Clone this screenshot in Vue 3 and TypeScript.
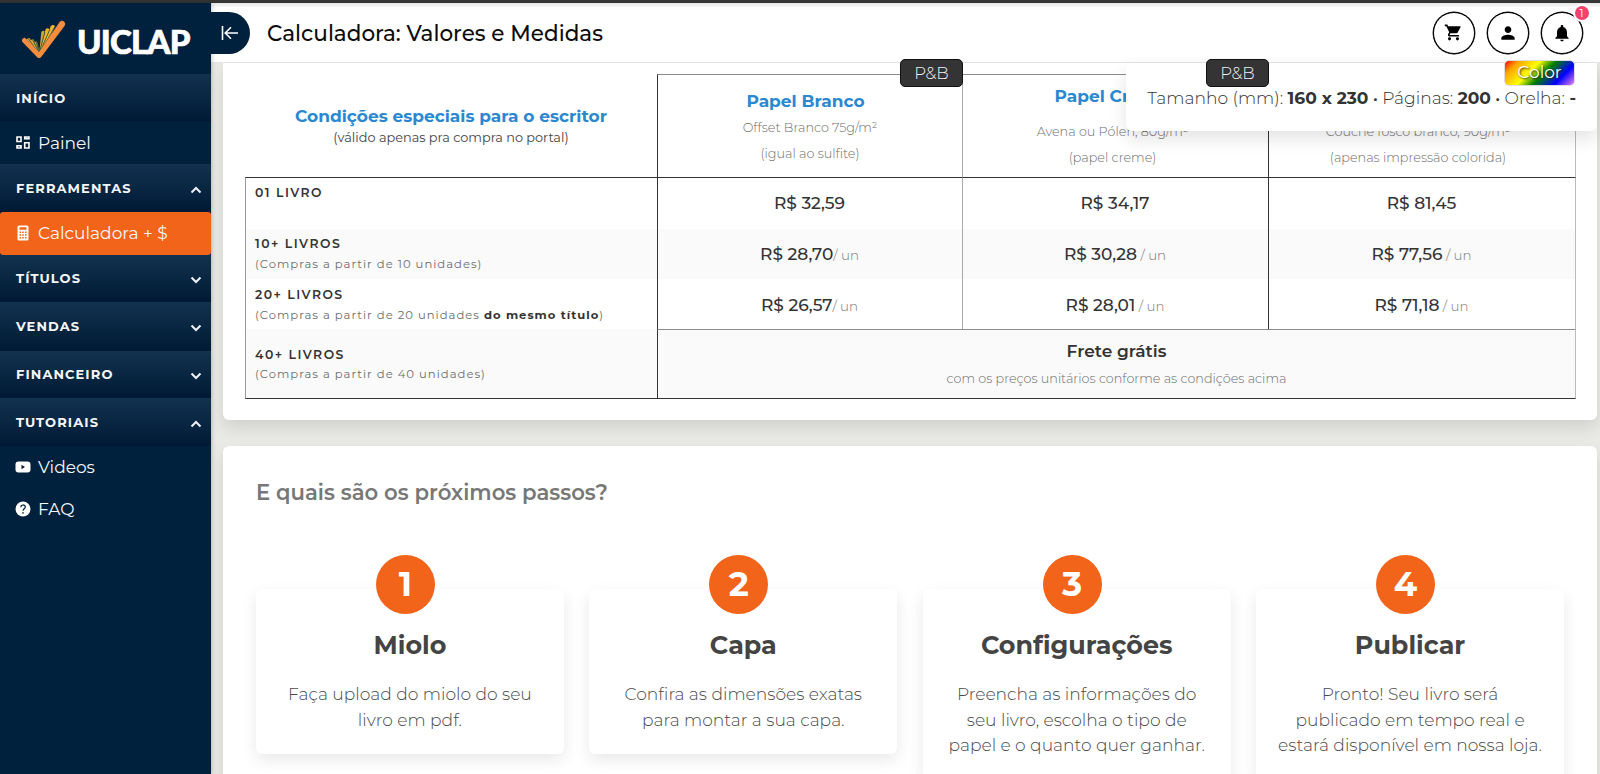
<script setup lang="ts">
import { ref } from 'vue'

interface NavItem {
	label: string
	icon: string
	active?: boolean
}

interface NavGroup {
	title: string
	height: number
	chevron?: 'up' | 'down'
	items: NavItem[]
}

const navGroups: NavGroup[] = [
	{ title: 'INÍCIO', height: 48, items: [{ label: 'Painel', icon: 'dashboard' }] },
	{
		title: 'FERRAMENTAS',
		height: 48,
		chevron: 'up',
		items: [{ label: 'Calculadora + $', icon: 'calculator', active: true }]
	},
	{ title: 'TÍTULOS', height: 47, chevron: 'down', items: [] },
	{ title: 'VENDAS', height: 49, chevron: 'down', items: [] },
	{ title: 'FINANCEIRO', height: 47, chevron: 'down', items: [] },
	{
		title: 'TUTORIAIS',
		height: 48,
		chevron: 'up',
		items: [
			{ label: 'Videos', icon: 'video' },
			{ label: 'FAQ', icon: 'help' }
		]
	}
]

const priceRows = [
	{
		label: '01 LIVRO',
		note: '',
		strong: '',
		end: '',
		prices: ['R$ 32,59', 'R$ 34,17', 'R$ 81,45'],
		units: ['', '', '']
	},
	{
		label: '10+ LIVROS',
		note: '(Compras a partir de 10 unidades',
		strong: '',
		end: ')',
		prices: ['R$ 28,70', 'R$ 30,28', 'R$ 77,56'],
		units: ['/ un', ' / un', ' / un']
	},
	{
		label: '20+ LIVROS',
		note: '(Compras a partir de 20 unidades ',
		strong: 'do mesmo título',
		end: ')',
		prices: ['R$ 26,57', 'R$ 28,01', 'R$ 71,18'],
		units: ['/ un', ' / un', ' / un']
	}
]

const steps = [
	{ title: 'Miolo', lines: ['Faça upload do miolo do seu', 'livro em pdf.'] },
	{ title: 'Capa', lines: ['Confira as dimensões exatas', 'para montar a sua capa.'] },
	{
		title: 'Configurações',
		lines: ['Preencha as informações do', 'seu livro, escolha o tipo de', 'papel e o quanto quer ganhar.']
	},
	{
		title: 'Publicar',
		lines: ['Pronto! Seu livro será', 'publicado em tempo real e', 'estará disponível em nossa loja.']
	}
]

const notifications = ref(1)
</script>

<template>
	<div class="app">
		<div class="top-line"></div>

		<aside class="sidebar">
			<div class="logo">
				<svg class="logo-mark" width="46" height="40" viewBox="0 0 46 40">
					<path d="M18 36 5.500 19l3-1L18.500 34z" fill="#e9a23c" />
					<path d="M18 35 9.500 20l3-.8L18.800 34z" fill="#d9a93a" />
					<path d="M18 35 13.500 22l2.500-.6L19 34z" fill="#b5a23a" />
					<path d="M18 35 20.300 12q1.600-2.300 3.400-.4L19.500 35z" fill="#c9a836" />
					<path d="M18.500 35 24.500 9.500q1.900-2.500 4 0L20 35z" fill="#eeb133" />
					<path d="M19 35 29.800 6.200q2-2.500 4.200-.2L21 35z" fill="#f8b62d" />
					<path d="M18.200 34 7.500 19M18.200 33 11.500 19.500M18.200 33 15 21M18.300 33 23.800 12M18.500 33 28.800 9.500M18.500 33 34 6.500" fill="none" stroke="#3e5640" stroke-width=".9" />
					<path d="M1 21.500Q.4 18.200 4 17.800L18 32.300 38.800 1.800Q41-.2 43.500 2q1.300 1.800 0 4L20 37.200q-2 1.800-3.800 0Z" fill="#f68c3e" />
				</svg>
				<span class="logo-text">UICLAP</span>
			</div>

			<nav>
				<template v-for="group in navGroups" :key="group.title">
					<div class="nav-group" :style="{ height: group.height + 'px' }">
						<span>{{ group.title }}</span>
						<svg
							v-if="group.chevron"
							class="chevron"
							:class="group.chevron"
							width="12"
							height="8"
							viewBox="0 0 12 8"
						>
							<path d="M1.500 1.500 6 6l4.500-4.500" fill="none" stroke="#eef2f6" stroke-width="2" />
						</svg>
					</div>
					<a
						v-for="item in group.items"
						:key="item.label"
						class="nav-item"
						:class="{ active: item.active }"
					>
						<svg v-if="item.icon === 'dashboard'" width="16" height="16" viewBox="0 0 16 16">
							<path
								d="M2 2h4v4.500H2zM9.700 2H14v1.800H9.700zM2 10.800h4v2.200H2zM9.700 7.800H14V13H9.700z"
								fill="none"
								stroke="#fff"
								stroke-width="1.600"
							/>
						</svg>
						<svg v-else-if="item.icon === 'calculator'" width="16" height="16" viewBox="0 0 16 16">
							<path
								fill="#fff"
								fill-rule="evenodd"
								d="M4 .5h8Q13.500.5 13.500 2v12q0 1.500-1.500 1.500H4Q2.500 15.500 2.500 14V2Q2.500.5 4 .5ZM4.500 2.200v2.500h7V2.200ZM4.500 6.500V8H6V6.500Zm2.700 0V8h1.600V6.500Zm2.800 0V8h1.500V6.500ZM4.500 9.200v1.500H6V9.200Zm2.700 0v1.500h1.600V9.200Zm2.800 0v1.500h1.500V9.200ZM4.500 12v1.500H6V12Zm2.700 0v1.500h1.600V12Zm2.800 0v1.500h1.500V12Z"
							/>
						</svg>
						<svg v-else-if="item.icon === 'video'" width="16" height="16" viewBox="0 0 16 16">
							<rect x=".5" y="2.500" width="15" height="11" rx="3" fill="#fff" />
							<path d="M6.500 5.800 10 8l-3.500 2.200z" fill="#00213e" />
						</svg>
						<svg v-else width="16" height="16" viewBox="0 0 16 16">
							<circle cx="8" cy="8" r="7.500" fill="#fff" />
							<path d="M5.800 6.300C5.800 3.200 10.300 3.300 10.300 6 10.300 7.700 8 7.700 8 9.700" fill="none" stroke="#00213e" stroke-width="1.200" />
							<circle cx="8" cy="11.900" r=".8" fill="#00213e" />
						</svg>
						<span>{{ item.label }}</span>
					</a>
				</template>
			</nav>
		</aside>

		<main class="main">
			<header class="header">
				<button class="collapse">
					<svg width="18" height="16" viewBox="0 0 18 16" fill="none" stroke="#fff" stroke-width="1.600">
						<path d="M1.500 1v14M17 8H4.500M10 2.200 4.200 8l5.800 5.800" />
					</svg>
				</button>
				<h1 class="page-title">Calculadora: Valores e Medidas</h1>
				<div class="actions">
					<button class="round">
						<svg width="19" height="19" viewBox="0 0 24 24">
							<path d="M7 18c-1.100 0-1.990.9-1.990 2S5.900 22 7 22s2-.9 2-2-.9-2-2-2zM1 2v2h2l3.600 7.590-1.350 2.450c-.16.280-.25.610-.25.960 0 1.100.9 2 2 2h12v-2H7.420c-.14 0-.25-.11-.25-.25l.03-.12.900-1.630h7.450c.75 0 1.410-.41 1.750-1.030l3.580-6.490A1 1 0 0 0 20 4H5.210l-.94-2H1zm16 16c-1.100 0-1.990.9-1.990 2s.89 2 1.990 2 2-.9 2-2-.9-2-2-2z" />
						</svg>
					</button>
					<button class="round">
						<svg width="20" height="20" viewBox="0 0 24 24">
							<path d="M12 12c2.210 0 4-1.790 4-4s-1.790-4-4-4-4 1.790-4 4 1.790 4 4 4zm0 2c-2.670 0-8 1.340-8 4v2h16v-2c0-2.660-5.330-4-8-4z" />
						</svg>
					</button>
					<button class="round">
						<svg width="20" height="20" viewBox="0 0 24 24">
							<path d="M12 22c1.100 0 2-.9 2-2h-4c0 1.100.89 2 2 2zm6-6v-5c0-3.070-1.640-5.640-4.500-6.320V4c0-.83-.67-1.500-1.500-1.500s-1.500.67-1.500 1.500v.68C7.630 5.360 6 7.920 6 11v5l-2 2v1h16v-1l-2-2z" />
						</svg>
						<span class="count">{{ notifications }}</span>
					</button>
				</div>
			</header>

			<section class="card prices-card">
				<div class="price-table">
					<div class="head-label">
						<h2 class="blue">Condições especiais para o escritor</h2>
						<p>(válido apenas pra compra no portal)</p>
					</div>
					<div class="head-cell branco">
						<span class="tag">P&amp;B</span>
						<h2 class="blue">Papel Branco</h2>
						<p>Offset Branco 75g/m²</p>
						<p>(igual ao sulfite)</p>
					</div>
					<div class="head-cell creme">
						<span class="tag">P&amp;B</span>
						<h2 class="blue">Papel Creme</h2>
						<p>Avena ou Pólen, 80g/m²</p>
						<p>(papel creme)</p>
					</div>
					<div class="head-cell couche">
						<span class="tag color">Color</span>
						<p>Couchê fosco branco, 90g/m²</p>
						<p>(apenas impressão colorida)</p>
					</div>

					<template v-for="(row, i) in priceRows" :key="row.label">
						<div class="row-label" :class="['row-' + i, { striped: i === 1 }]">
							<h3>{{ row.label }}</h3>
							<p v-if="row.note">{{ row.note }}<b>{{ row.strong }}</b>{{ row.end }}</p>
						</div>
						<div
							v-for="(price, c) in row.prices"
							:key="price"
							class="price"
							:class="['col-' + c, 'row-' + i, { striped: i === 1 }]"
						>
							{{ price }}<small>{{ row.units[c] }}</small>
						</div>
					</template>

					<div class="row-label last striped">
						<h3>40+ LIVROS</h3>
						<p>(Compras a partir de 40 unidades)</p>
					</div>
					<div class="free-shipping striped">
						<h3>Frete grátis</h3>
						<p>com os preços unitários conforme as condições acima</p>
					</div>
				</div>
			</section>

			<section class="card steps-card">
				<h2 class="steps-title">E quais são os próximos passos?</h2>
				<div class="steps">
					<article v-for="(step, i) in steps" :key="step.title" class="step">
						<div class="step-number">{{ i + 1 }}</div>
						<h3>{{ step.title }}</h3>
						<p v-for="line in step.lines" :key="line">{{ line }}</p>
					</article>
				</div>
			</section>

			<!-- Floating summary of the current book -->
			<div class="summary">
				Tamanho (mm): <b>160 x 230</b> <i>·</i> Páginas: <b>200</b> <i>·</i> Orelha: <b>-</b>
			</div>
		</main>
	</div>
</template>

<style>
body {
	overflow: hidden;
}
</style>

<style scoped>
* {
	box-sizing: border-box;
}
h1,
h2,
h3,
p {
	margin: 0;
}
button {
	padding: 0;
	font: inherit;
}
.app {
	display: grid;
	grid-template: 3px 771px / 211px 1389px;
	height: 774px;
	overflow: hidden;
	font-family: Montserrat, Inter, 'Open Sans', sans-serif;
	color: #333;
	background: #e9eae5;
	white-space: nowrap;
}
.top-line {
	grid-column: 1 / 3;
	background: #363636;
}

/* Sidebar */
.sidebar {
	position: relative;
	z-index: 2;
	background: #00213e;
	box-shadow: 0 0 5px rgba(0, 0, 0, 0.3);
}
.logo {
	display: flex;
	align-items: center;
	height: 71px;
	padding-left: 21px;
}
.logo-mark {
	flex: none;
	margin-top: 3px;
}
.logo-text {
	margin: 4px 0 0 10px;
	color: #fff;
	font: 900 33px/40px Lato, sans-serif;
	letter-spacing: -0.8px;
	-webkit-text-stroke: 0.7px #fff;
}
.nav-group {
	display: flex;
	align-items: center;
	justify-content: space-between;
	padding: 0 9px 1px 16px;
	background: linear-gradient(#12324f, #001a35);
	color: #f4f6f8;
	font-size: 13px;
	font-weight: 700;
	letter-spacing: 1.1px;
}
.chevron {
	margin-top: 4px;
}
.chevron.up {
	transform: rotate(180deg);
}
.nav-item {
	display: flex;
	align-items: center;
	gap: 7px;
	height: 42px;
	padding: 0 0 1px 15px;
	color: #f5f7fa;
	font-size: 17px;
}
.nav-item.active {
	height: 43px;
	padding-bottom: 2px;
	border-radius: 3px;
	background: #f26419;
}

/* Header */
.main {
	position: relative;
	padding-right: 3px;
}
.header {
	display: flex;
	align-items: center;
	height: 60px;
	margin-right: -3px;
	border-bottom: 1px solid #e6e6e6;
	background: linear-gradient(#e6e6e6, #fff 5px);
}
.collapse {
	position: relative;
	z-index: 3;
	display: flex;
	align-items: center;
	justify-content: center;
	width: 38.5px;
	height: 42px;
	border: 0;
	border-radius: 0 21px 21px 0;
	background: #00213e;
}
.page-title {
	margin-left: 17.5px;
	color: #0b0b0b;
	font-size: 21.5px;
	font-weight: 500;
}
.actions {
	display: flex;
	gap: 12px;
	margin-left: auto;
	padding-right: 17.5px;
}
.round {
	position: relative;
	display: flex;
	align-items: center;
	justify-content: center;
	width: 42px;
	height: 42px;
	border: 1.5px solid #000;
	border-radius: 50%;
	background: #fff;
	box-shadow: 0 0 0 0.4px #000;
}
.count {
	position: absolute;
	top: -9px;
	right: -9px;
	width: 18px;
	height: 18px;
	border: 2px solid #fff;
	border-radius: 50%;
	background: #f5426c;
	color: #fff;
	font-size: 11px;
	line-height: 14px;
	text-align: center;
}

/* Price table */
.card {
	margin-left: 12px;
	border-radius: 6px;
	background: #fff;
	box-shadow: 0 8px 16px rgba(0, 0, 0, 0.1);
}
.prices-card {
	height: 357px;
	padding: 11px 21px 0 22px;
	border-radius: 0 0 6px 6px;
}
.price-table {
	display: grid;
	grid-template: 103px 52px 50px 50px 70px / 412px 305px 306px 308px;
	text-align: center;
}
.blue {
	color: #2b88d0;
	font-size: 17px;
	font-weight: 700;
	line-height: 22px;
}
.head-label {
	padding-top: 31px;
}
.head-label p {
	color: #444;
	font-size: 12.85px;
	line-height: 21px;
}
.head-cell {
	position: relative;
	padding-top: 15px;
	border-top: 1px solid #8c8c8c;
	border-left: 1px solid #333;
}
.head-cell p {
	color: #6d6d6d;
	font-size: 12.75px;
	font-weight: 300;
	line-height: 25.5px;
}
.head-cell .blue {
	margin-right: 9px;
}
.branco p:nth-of-type(1) {
	margin-top: 3px;
}
.creme {
	padding-top: 10px;
	border-left-color: #aaa;
}
.creme .blue {
	margin-right: 8px;
	margin-bottom: 12px;
}
.creme p {
	padding-right: 6px;
}
.couche {
	padding-top: 44px;
	border-right: 1px solid #bbb;
}
.couche p {
	padding-right: 8px;
}
.tag {
	position: absolute;
	z-index: 3;
	top: -16px;
	right: -1px;
	width: 63px;
	height: 28px;
	border: 1px solid #111;
	border-radius: 5px;
	background: #343434;
	color: #f0f0f0;
	font-size: 16.5px;
	font-weight: 300;
	line-height: 26px;
}
.tag.color {
	top: -15px;
	right: 0;
	width: 71px;
	height: 26px;
	border: 1px solid #ddd;
	background: linear-gradient(135deg, red, orange 15%, yellow 38%, green 55%, blue 78%, violet);
	color: #fff;
	font-size: 17px;
	font-weight: 400;
	line-height: 23px;
	text-shadow: 1px 1px 2px #222;
}
.row-label {
	padding: 4px 0 0 9px;
	border-left: 1px solid #999;
	text-align: left;
}
.row-label h3 {
	font-size: 12.4px;
	font-weight: 600;
	line-height: 21px;
	letter-spacing: 1.5px;
}
.row-label p {
	color: #6d6d6d;
	font-size: 11.6px;
	line-height: 20px;
	letter-spacing: 1px;
}
.row-label b {
	color: #333;
}
.row-label.row-2 {
	padding-top: 5px;
}
.row-label.last {
	padding-top: 15px;
	border-bottom: 1px solid #333;
}
.row-label.last p {
	line-height: 18px;
}
.row-0 {
	border-top: 1px solid #333;
}
.striped {
	background: #fafafa;
}
.price {
	padding-right: 1px;
	border-left: 1px solid #333;
	font-size: 17px;
	font-weight: 500;
	line-height: 50px;
	white-space: pre;
}
.price.row-2 {
	line-height: 52px;
	height: 50px;
}
.price.col-1 {
	border-left-color: #aaa;
}
.price.col-2 {
	border-right: 1px solid #bbb;
}
.price small {
	color: #777;
	font-size: 13.4px;
	font-weight: 300;
}
.free-shipping {
	grid-column: 2 / 5;
	padding-top: 9px;
	border: 1px solid #333;
	border-top-color: #8c8c8c;
	border-right-color: #bbb;
}
.free-shipping h3 {
	font-size: 17px;
	font-weight: 600;
	line-height: 24px;
}
.free-shipping p {
	color: #6d6d6d;
	font-size: 12.75px;
	font-weight: 300;
	line-height: 31px;
}

/* Next steps */
.steps-card {
	height: 400px;
	margin-top: 26px;
	padding: 31px 33px 0 33px;
}
.steps-title {
	color: #777;
	font-size: 21.2px;
	font-weight: 600;
	line-height: 30px;
}
.steps {
	display: grid;
	grid-template-columns: repeat(4, 1fr);
	align-items: start;
	gap: 25.5px;
	margin-top: 82px;
}
.step {
	min-height: 165px;
	padding-bottom: 21px;
	border-radius: 6px;
	background: #fff;
	box-shadow: 0 6px 16px rgba(0, 0, 0, 0.09);
	text-align: center;
}
.step-number {
	width: 59px;
	height: 59px;
	margin: -34px auto 0;
	margin-left: calc(50% - 34px);
	border-radius: 50%;
	background: #f26419;
	color: #fff;
	font-size: 34px;
	font-weight: 700;
	line-height: 59px;
}
.step h3 {
	margin: 13px 0 18px;
	color: #444;
	font-size: 25.4px;
	font-weight: 700;
	line-height: 36px;
}
.step p {
	color: #4a4a4a;
	font-size: 17.1px;
	font-weight: 300;
	line-height: 25.5px;
}

.summary {
	position: absolute;
	z-index: 2;
	top: 60px;
	right: 3px;
	width: 471px;
	height: 68px;
	padding-right: 21px;
	border-radius: 6px;
	background: #fff;
	box-shadow: 0 8px 18px rgba(0, 0, 0, 0.11);
	font-size: 17.1px;
	font-weight: 300;
	line-height: 69px;
	text-align: right;
}
.summary b {
	font-weight: 700;
}
.summary i {
	font-style: normal;
	font-weight: 600;
}
</style>
